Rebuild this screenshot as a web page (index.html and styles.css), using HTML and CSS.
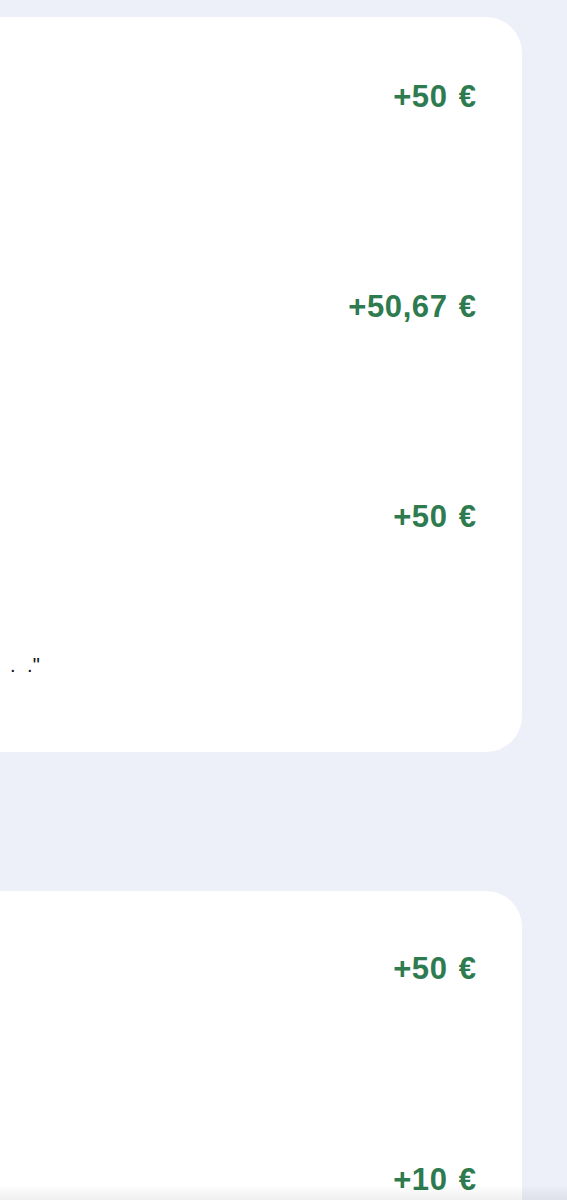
FILE: index.html
```html
<!DOCTYPE html>
<html lang="fr">
<head>
<meta charset="utf-8">
<title>Transactions</title>
<link rel="stylesheet" href="styles.css">
</head>
<body>
<main class="feed">
  <section class="card">
    <div class="row"><span class="amount">+50 €</span></div>
    <div class="row"><span class="amount">+50,67 €</span></div>
    <div class="row"><span class="amount">+50 €</span></div>
    <p class="quote">. .&quot;</p>
  </section>
  <section class="card card-second">
    <div class="row"><span class="amount">+50 €</span></div>
    <div class="row"><span class="amount">+10 €</span></div>
  </section>
</main>
<div class="bottom-fade"></div>
</body>
</html>
```
FILE: styles.css
```css
html, body {
  margin: 0;
  padding: 0;
}
body {
  background: #eef0f9;
  font-family: "Liberation Sans", Arial, sans-serif;
  overflow: hidden;
  height: 1200px;
}
.feed {
  height: 1200px;
  box-sizing: border-box;
  padding-top: 17px;
  display: flex;
  flex-direction: column;
  gap: 139px;
  overflow: hidden;
}
.card {
  flex-shrink: 0;
  background: #ffffff;
  border-radius: 36px;
  margin-left: -40px;
  margin-right: 45px;
  padding: 0 46px 77px 0;
}
.card-second {
  padding-bottom: 0;
}
.row {
  height: 210px;
  padding-top: 62px;
  box-sizing: border-box;
  display: flex;
  justify-content: flex-end;
}
.card-second .row {
  padding-top: 60px;
  height: 211px;
}
.card-second .row:last-child {
  height: 160px;
}
.amount {
  color: #2d7b4f;
  font-weight: 700;
  font-size: 31px;
  line-height: 36px;
  letter-spacing: 0.6px;
  word-spacing: 2px;
  margin-right: -0.6px;
}
.quote {
  margin: 8px 0 0 50px;
  font-size: 20px;
  line-height: 20px;
  word-spacing: 6px;
  color: #111;
}
.bottom-fade {
  position: fixed;
  left: 0;
  right: 0;
  bottom: 0;
  height: 16px;
  background: linear-gradient(to bottom, rgba(0,0,0,0), rgba(0,0,0,0.06));
  pointer-events: none;
}
```
